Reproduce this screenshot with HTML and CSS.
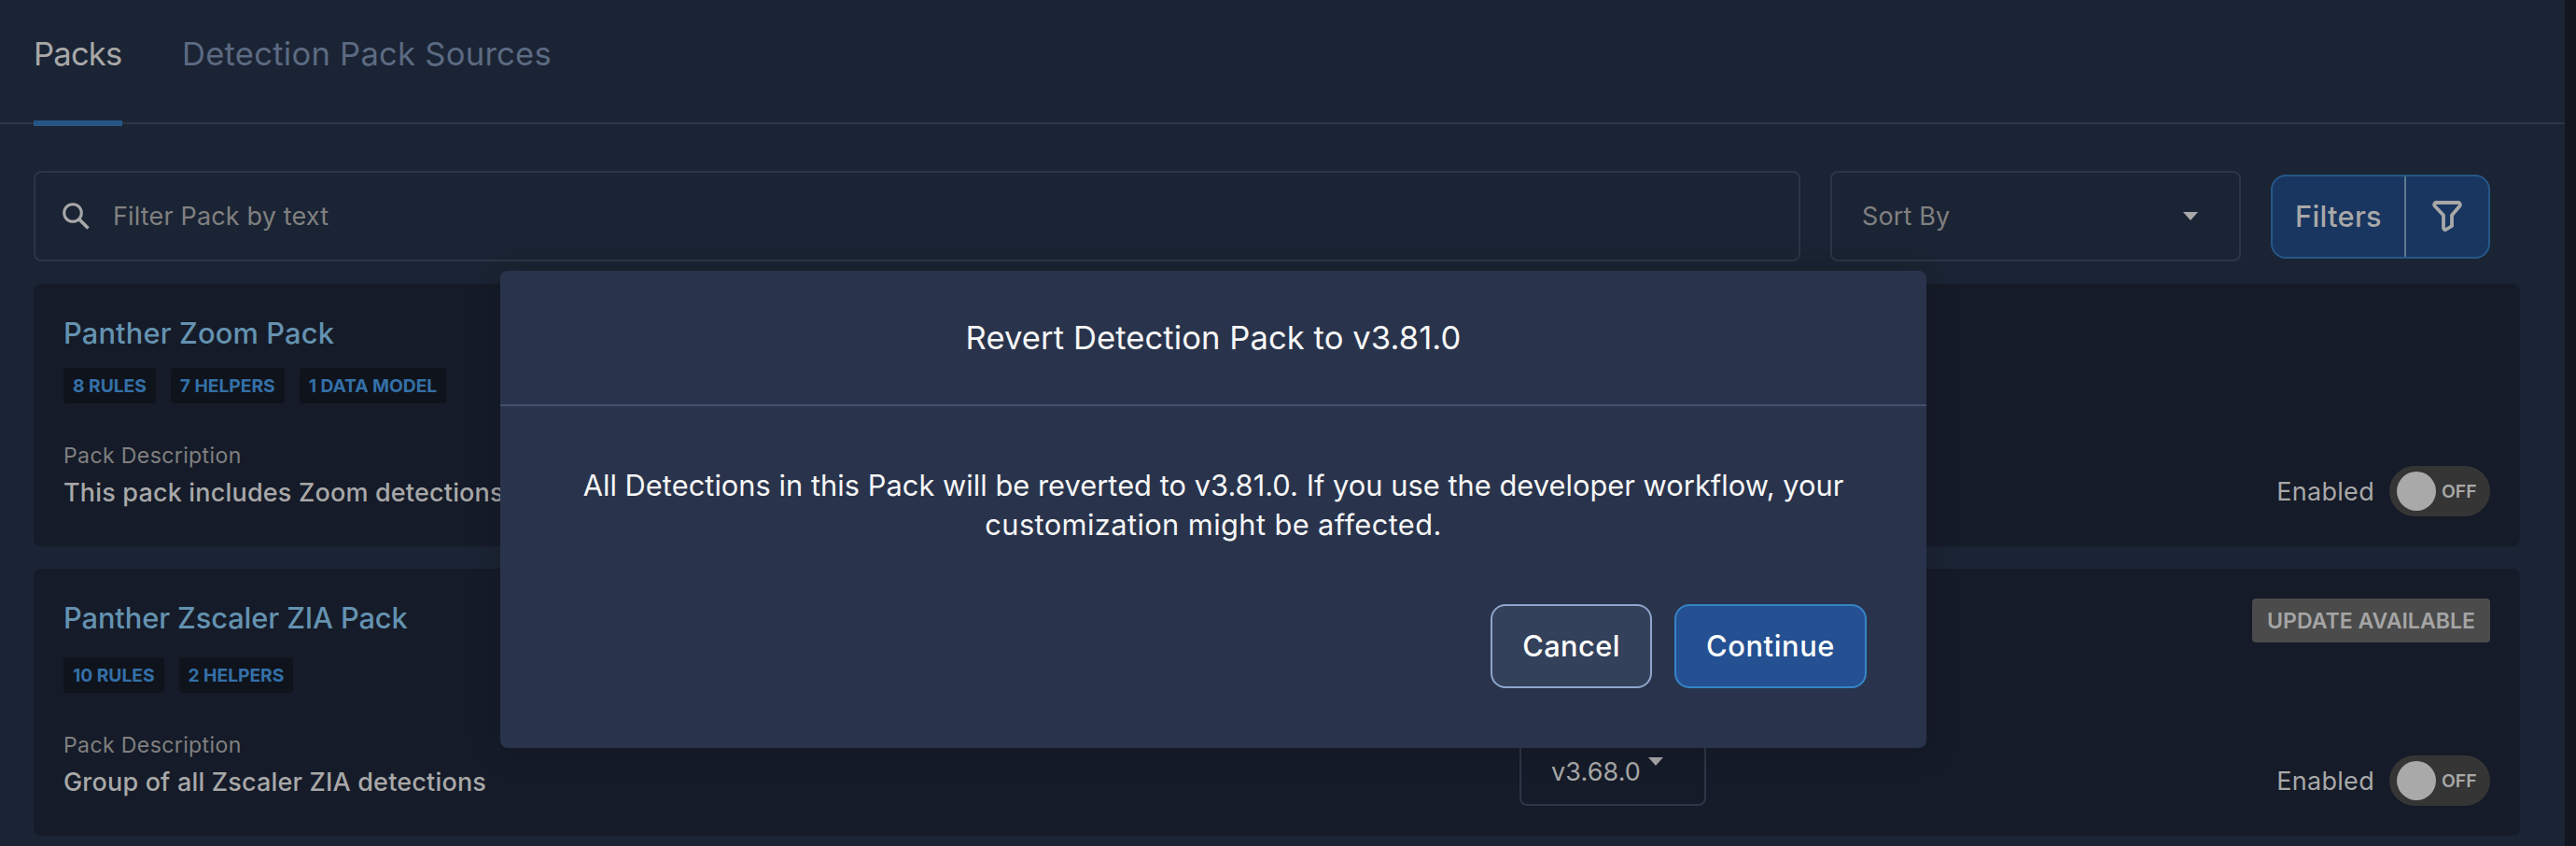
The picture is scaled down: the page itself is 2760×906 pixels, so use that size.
FILE: index.html
```
<!DOCTYPE html>
<html lang="en">
<head>
    <meta charset="UTF-8">
    <meta name="viewport" content="width=device-width, initial-scale=1.0">
    <title>Detection Packs</title>
    <link rel="stylesheet" href="styles.css">
</head>
<body>
    <div class="page">
        <nav class="tabs">
            <div class="tab active">Packs</div>
            <div class="tab">Detection Pack Sources</div>
        </nav>
        <div class="content">
            <div class="toolbar">
                <div class="search">
                    <svg width="32" height="32" viewBox="0 0 32 32" fill="none" stroke="currentColor">
                        <circle cx="12" cy="12" r="9.3" stroke-width="3"/>
                        <path d="M19 19l9.500 9.500" stroke-width="3.6"/>
                    </svg>
                    <span class="placeholder">Filter Pack by text</span>
                </div>
                <div class="sort">
                    <span class="sort-label">Sort By</span>
                    <span class="caret"></span>
                </div>
                <div class="filters">
                    <span class="filters-label">Filters</span>
                    <span class="filters-icon">
                        <svg width="36" height="38" viewBox="0 0 36 38" fill="none" stroke="currentColor" stroke-width="3.8" stroke-linejoin="round">
                            <path d="M5.500 4h25q2 1.500 1 3.500L23 17.500v11.500L16.500 33q-2 .5-2.500-2V17.500L4.500 7.500q-1-2 1-3.500z"/>
                        </svg>
                    </span>
                </div>
            </div>

            <div class="pack">
                <div class="pack-header">
                    <div class="pack-title">Panther Zoom Pack</div>
                </div>
                <div class="badges">
                    <span class="badge">8 RULES</span>
                    <span class="badge">7 HELPERS</span>
                    <span class="badge">1 DATA MODEL</span>
                </div>
                <div class="pack-body">
                    <div class="description">
                        <div class="description-label">Pack Description</div>
                        <div class="description-text">This pack includes Zoom detections</div>
                    </div>
                    <div class="enabled">
                        <span class="enabled-label">Enabled</span>
                        <div class="toggle"><span class="knob"></span><span class="toggle-text">OFF</span></div>
                    </div>
                </div>
            </div>

            <div class="pack">
                <div class="pack-header">
                    <div class="pack-title zia">Panther Zscaler ZIA Pack</div>
                    <div class="update">UPDATE AVAILABLE</div>
                </div>
                <div class="badges">
                    <span class="badge">10 RULES</span>
                    <span class="badge">2 HELPERS</span>
                </div>
                <div class="pack-body">
                    <div class="description">
                        <div class="description-label">Pack Description</div>
                        <div class="description-text">Group of all Zscaler ZIA detections</div>
                    </div>
                    <div class="version">
                        <span class="version-text">v3.68.0</span>
                        <span class="caret"></span>
                    </div>
                    <div class="enabled">
                        <span class="enabled-label">Enabled</span>
                        <div class="toggle"><span class="knob"></span><span class="toggle-text">OFF</span></div>
                    </div>
                </div>
            </div>
        </div>
    </div>

    <div class="modal">
        <div class="modal-header">Revert Detection Pack to v3.81.0</div>
        <div class="modal-body">
            <p class="modal-text">All Detections in this Pack will be reverted to v3.81.0. If you use the developer workflow, your<br><span class="modal-text-end">customization might be affected.</span></p>
            <div class="modal-actions">
                <button class="btn cancel">Cancel</button>
                <button class="btn continue">Continue</button>
            </div>
        </div>
    </div>
</body>
</html>
```
FILE: styles.css
```
* {
    box-sizing: border-box;
}

body {
    margin: 0;
    height: 906px;
    overflow: hidden;
    position: relative;
    background-color: #12161f;
    color: #a8a8a8;
    font-family: Inter, sans-serif;
    font-size: 27px;
    white-space: nowrap;
}

.page {
    width: 2748px;
    height: 906px;
    background-color: #1b2434;
}

/* Tabs */
.tabs {
    display: flex;
    gap: 64px;
    height: 133px;
    padding: 35px 36px 0;
    border-bottom: 2px solid #2d3647;
}

.tab {
    position: relative;
    height: 96px;
    font-size: 34.6px;
    line-height: 44px;
    letter-spacing: 0.25px;
    color: #5c6a82;
}

.tab.active {
    width: 95px;
    letter-spacing: -0.8px;
    color: #a8a8a8;
}

.tab.active::after {
    content: "";
    position: absolute;
    left: 0;
    right: 0;
    bottom: -4px;
    height: 6px;
    background-color: #265685;
}

.content {
    display: flex;
    flex-direction: column;
    gap: 24px;
    padding: 50px 48px 0 36px;
}

/* Search, sort and filters */
.toolbar {
    display: flex;
    align-items: center;
    gap: 32px;
    height: 97px;
    padding-right: 32px;
}

.search,
.sort {
    display: flex;
    align-items: center;
    height: 97px;
    border: 2px solid #2d3647;
    border-radius: 8px;
}

.search {
    flex: 1;
    gap: 23px;
    padding-left: 28px;
}

.placeholder,
.sort-label {
    color: #808080;
    letter-spacing: 0.15px;
}

.sort {
    width: 440px;
    justify-content: space-between;
    padding: 0 44px 0 32px;
}

.caret {
    border-left: 8px solid transparent;
    border-right: 8px solid transparent;
    border-top: 9px solid #a8a8a8;
}

.filters {
    display: flex;
    width: 235px;
    height: 90px;
    margin-top: 1px;
    border: 2px solid #265787;
    border-radius: 16px;
    background-color: #193660;
}

.filters-label {
    width: 143px;
    padding-left: 24px;
    border-right: 2px solid #5f7690;
    font-size: 30.8px;
    font-weight: 500;
    line-height: 86px;
    letter-spacing: 0.3px;
}

.filters-icon {
    display: flex;
    flex: 1;
    align-items: center;
    justify-content: center;
}

/* Pack cards */
.pack {
    padding: 32px;
    border-radius: 8px;
    background-color: #151b28;
}

.pack-header {
    display: flex;
    align-items: flex-start;
    justify-content: space-between;
    margin-bottom: 16px;
}

.pack-title {
    font-size: 30.8px;
    font-weight: 500;
    line-height: 42px;
    letter-spacing: 0.15px;
    color: #6492b0;
}

.pack-title.zia {
    letter-spacing: -0.1px;
}

.update {
    width: 255px;
    height: 47px;
    border-radius: 4px;
    background-color: #4b4b4b;
    color: #a5a5a5;
    font-size: 23.1px;
    font-weight: 600;
    line-height: 48px;
    text-align: center;
}

.badges {
    display: flex;
    gap: 16px;
    height: 38px;
}

.badge {
    padding: 0 10px;
    border-radius: 4px;
    background-color: #0f131b;
    color: #3470a8;
    font-size: 19.3px;
    font-weight: 700;
    line-height: 38px;
    letter-spacing: -0.05px;
}

.pack-body {
    display: grid;
    grid-template-columns: 1560px 200px 1fr;
    align-items: end;
    height: 121px;
}

.description {
    padding-bottom: 3px;
}

.description-label {
    font-size: 23.1px;
    line-height: 36px;
    letter-spacing: 0.35px;
    color: #808080;
}

.description-text {
    font-weight: 500;
    line-height: 44px;
    letter-spacing: 0.18px;
}

.version {
    display: flex;
    align-items: center;
    gap: 8px;
    height: 96px;
    padding-left: 32px;
    border: 2px solid #2d3647;
    border-radius: 8px;
}

.version-text {
    padding-top: 22px;
    letter-spacing: 0.1px;
}

.enabled {
    display: flex;
    grid-column: 3;
    align-items: center;
    justify-content: flex-end;
    gap: 16px;
}

.enabled-label {
    letter-spacing: 0.3px;
}

.toggle {
    display: flex;
    align-items: center;
    gap: 6px;
    width: 108px;
    height: 54px;
    padding-left: 8px;
    border-radius: 27px;
    background-color: #353535;
}

.knob {
    width: 42px;
    height: 42px;
    border-radius: 50%;
    background-color: #a9a9a9;
}

.toggle-text {
    font-size: 19.3px;
    font-weight: 600;
}

/* Revert dialog */
.modal {
    position: absolute;
    left: 536px;
    top: 290px;
    width: 1528px;
    height: 511px;
    border-radius: 8px;
    background-color: #29344c;
    box-shadow: 0 0 30px rgba(20, 20, 25, 0.35);
    color: #f7f7f7;
}

.modal-header {
    height: 145px;
    border-bottom: 2px solid #44516b;
    font-size: 34.6px;
    line-height: 143px;
    letter-spacing: 0.08px;
    text-align: center;
}

.modal-body {
    padding: 64px 64px 0;
}

.modal-text {
    margin: 0;
    font-size: 30.8px;
    line-height: 42px;
    letter-spacing: 0.03px;
    text-align: center;
}

.modal-text-end {
    letter-spacing: 0.4px;
}

.modal-actions {
    display: flex;
    justify-content: flex-end;
    gap: 24px;
    margin-top: 64px;
}

.btn {
    height: 90px;
    padding: 0 0 2px;
    border-radius: 16px;
    color: #fff;
    font-family: inherit;
    font-size: 30.8px;
    font-weight: 500;
}

.cancel {
    width: 173px;
    border: 2px solid #8fa6cc;
    background-color: #34415b;
    letter-spacing: 0.4px;
}

.continue {
    width: 206px;
    border: 2px solid #3684c7;
    background-color: #255192;
    letter-spacing: 0.6px;
}
```
